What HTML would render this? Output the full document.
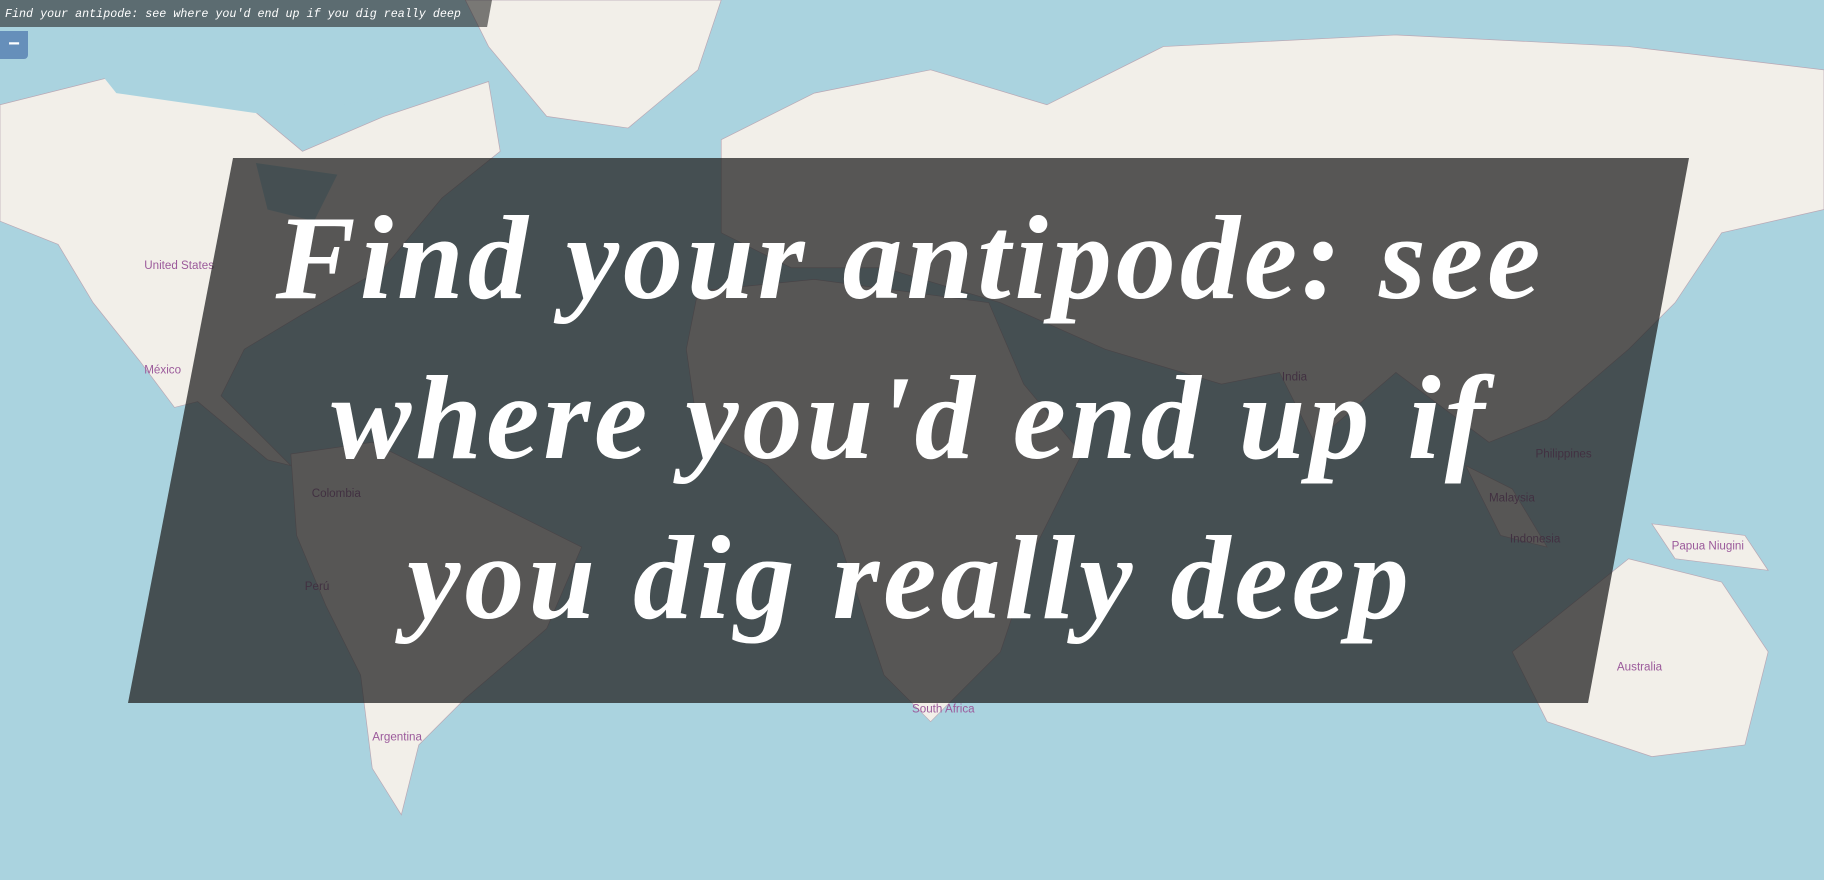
<!DOCTYPE html>
<html><head><meta charset="utf-8"><style>
html,body{margin:0;padding:0;width:1824px;height:880px;overflow:hidden;background:#aad3df;font-family:"Liberation Sans",sans-serif}
#map{position:absolute;left:0;top:0;width:1824px;height:880px}
#t{position:absolute;left:0;top:0;height:27px;width:492px;background:rgba(40,40,40,.6);clip-path:polygon(0 0,100% 0,99% 100%,0 100%);color:#fff;font:italic 11.7px "Liberation Mono",monospace;line-height:28px;padding-left:5px;box-sizing:border-box;white-space:nowrap}
#z{position:absolute;left:0;top:31px;width:28px;height:28px;background:rgba(90,130,180,.85);border-radius:0 0 4px 0;color:#fff;font:bold 20px "Liberation Sans";text-align:center;line-height:26px}
#b{position:absolute;left:0;top:0;width:1824px;height:880px}
#txt{position:absolute;left:130px;top:178px;width:1560px;text-align:center;color:#fff;font:italic bold 120px/160px "Liberation Serif",serif;letter-spacing:4px}
</style></head><body>
<svg id="map" viewBox="0 0 1568 756" preserveAspectRatio="none">
<g fill="#f2efe9" stroke="#b9a8b5" stroke-width="0.6">
<polygon points="0,90 120,60 200,80 260,130 330,100 420,70 430,130 380,170 330,230 260,270 210,300 190,340 250,400 230,395 170,345 150,350 120,310 80,260 50,210 0,190"/>
<polygon points="400,0 620,0 600,60 540,110 470,100 420,40"/>
<polygon points="250,390 320,380 400,420 500,470 470,540 400,600 360,640 345,700 320,660 310,580 280,520 255,460"/>
<polygon points="600,250 700,240 850,260 880,330 930,390 890,470 860,560 800,620 760,580 720,460 660,400 600,370 590,300"/>
<polygon points="620,120 700,80 800,60 900,90 1000,40 1200,30 1400,40 1568,60 1568,180 1480,200 1440,260 1400,300 1330,360 1280,380 1200,320 1130,380 1100,320 1050,330 950,300 860,260 760,230 680,230 620,200"/>
<polygon points="1300,560 1400,480 1480,500 1520,560 1500,640 1420,650 1330,620"/>
<polygon points="1420,450 1500,460 1520,490 1440,480"/>
<polygon points="1260,400 1300,420 1330,470 1290,460"/>
</g>
<g fill="#aad3df"><polygon points="60,30 300,40 350,80 240,100 100,80"/><polygon points="220,140 290,150 270,190 230,180"/></g>
<g fill="#9b5a9b" font-size="10" font-family="Liberation Sans">
<text x="124" y="231">United States</text><text x="124" y="321">México</text><text x="268" y="427">Colombia</text><text x="262" y="507">Perú</text><text x="320" y="636">Argentina</text><text x="784" y="612">South Africa</text><text x="1390" y="576">Australia</text><text x="1437" y="472">Papua Niugini</text><text x="1102" y="327">India</text><text x="1320" y="393">Philippines</text><text x="1280" y="431">Malaysia</text><text x="1298" y="466">Indonesia</text>
</g>
</svg>
<svg id="b" viewBox="0 0 1824 880"><polygon points="233,158 1689,158 1588,703 128,703" fill="rgba(35,35,35,.75)"/></svg>
<div id="txt">Find your antipode: see<br>where you'd end up if<br>you dig really deep</div>
<div id="t">Find your antipode: see where you'd end up if you dig really deep</div>
<div id="z">−</div>
</body></html>
